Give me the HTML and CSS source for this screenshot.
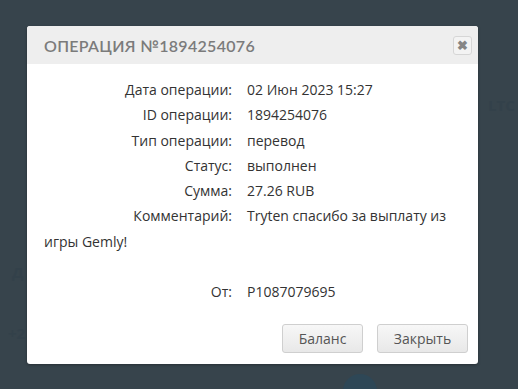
FILE: index.html
```html
<!DOCTYPE html>
<html lang="ru">
<head>
  <meta charset="UTF-8">
  <title>Операция №1894254076</title>
  <meta name="viewport" content="width=device-width, initial-scale=1.0">
  <link rel="stylesheet" href="styles.css">
</head>
<body>
  <!-- страница под затемнением -->
  <div class="backdrop">
    <span class="ghost ghost-ltc">LTC</span>
    <span class="ghost ghost-d">Д</span>
    <span class="ghost ghost-plus">+2</span>
    <span class="ghost-circle"></span>
  </div>

  <div class="modal">
    <div class="modal-header">
      <h3>Операция №1894254076</h3>
      <button class="close" type="button">&#10006;</button>
    </div>

    <div class="modal-body">
      <div class="row"><span class="label">Дата операции:</span><span class="value">02 Июн 2023 15:27</span></div>
      <div class="row"><span class="label">ID операции:</span><span class="value">1894254076</span></div>
      <div class="row"><span class="label">Тип операции:</span><span class="value">перевод</span></div>
      <div class="row"><span class="label">Статус:</span><span class="value">выполнен</span></div>
      <div class="row"><span class="label">Сумма:</span><span class="value">27.26 RUB</span></div>
      <div class="row"><span class="label">Комментарий:</span>Tryten спасибо за выплату из игры Gemly!</div>
      <div class="row empty"></div>
      <div class="row"><span class="label">От:</span><span class="value">P1087079695</span></div>
    </div>

    <div class="modal-footer">
      <button class="btn" type="button">Баланс</button>
      <button class="btn" type="button">Закрыть</button>
    </div>
  </div>
</body>
</html>
```

FILE: styles.css
```css
/* фон страницы */
body {
  margin: 0;
  padding: 26px 0 0 27px;
  background-color: #37444c;
  font-family: 'Open Sans', sans-serif;
  min-height: 389px;
  box-sizing: border-box;
  position: relative;
  overflow: hidden;
}
/* блеклые элементы под затемнением */
.ghost {
  position: absolute;
  color: #33414a;
  font-size: 15px;
  font-weight: bold;
}
.ghost-ltc { left: 488px; top: 95px; }
.ghost-d { left: 12px; top: 262px; }
.ghost-plus { left: 8px; top: 323px; }
.ghost-circle {
  position: absolute;
  left: 343px;
  top: 374px;
  width: 34px;
  height: 34px;
  border-radius: 50%;
  background-color: #2e4756;
}
/* окно */
.modal {
  position: relative;
  width: 451px;
  height: 338px;
  background-color: #fff;
  border-radius: 3px;
  display: flex;
  flex-direction: column;
  overflow: hidden;
  box-shadow: 0 1px 3px rgba(0, 0, 0, 0.3);
}
.modal-header {
  height: 38px;
  background-color: #eeeeee;
  display: flex;
  align-items: center;
  justify-content: space-between;
  padding: 0 6px 0 17px;
}
.modal-header h3 {
  margin: 0;
  font-family: 'Lato', sans-serif;
  font-size: 16px;
  font-weight: 600;
  letter-spacing: 0.3px;
  text-transform: uppercase;
  color: #7b7b7b;
}
.close {
  width: 19px;
  height: 19px;
  padding: 0;
  border: 1px solid #d6d6d6;
  border-radius: 3px;
  background-color: #f3f3f3;
  color: #858585;
  font-size: 13px;
  font-weight: bold;
  line-height: 17px;
}
/* содержимое */
.modal-body {
  padding: 13px 17px 0;
  color: #333;
  font-size: 14px;
}
.row {
  line-height: 25.3px;
  min-height: 25.3px;
}
.label {
  display: inline-block;
  width: 188px;
  text-align: right;
  margin-right: 15px;
}
/* кнопки */
.modal-footer {
  margin-top: auto;
  display: flex;
  justify-content: flex-end;
  gap: 14px;
  padding: 0 10px 11px;
}
.btn {
  height: 29px;
  padding: 0 14px;
  font-family: 'Open Sans', sans-serif;
  font-size: 14px;
  color: #555;
  border: 1px solid #cfcfcf;
  border-radius: 3px;
  background: linear-gradient(#f7f7f7, #e8e8e8);
}
.btn:first-child { width: 81px; }
.btn:last-child { width: 91px; }
```
